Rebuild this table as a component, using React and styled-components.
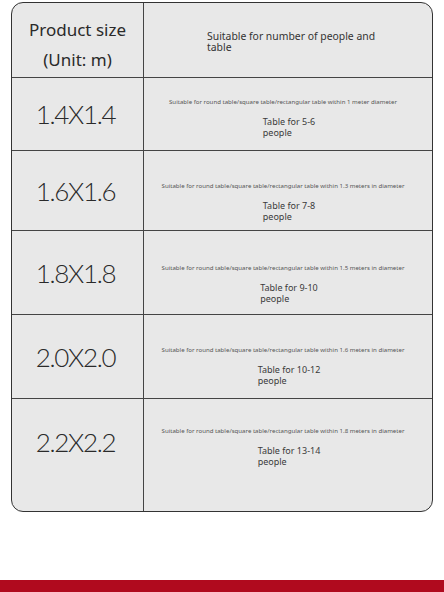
import React from 'react';
import styled, { createGlobalStyle } from 'styled-components';

const GlobalStyle = createGlobalStyle`
  html, body {
    margin: 0;
    padding: 0;
    background: #ffffff;
    font-family: "Noto Sans", "Open Sans", sans-serif;
  }
`;

const Page = styled.div`
  display: flex;
  flex-direction: column;
  height: 592px;
  padding-top: 2px;
  box-sizing: border-box;
`;

const Table = styled.div`
  margin: 0 11px;
  height: 510px;
  box-sizing: border-box;
  border: 1.5px solid #333;
  border-radius: 12px;
  background: #e8e8e8;
  overflow: hidden;
  display: flex;
  flex-direction: column;
`;

const Row = styled.div`
  display: grid;
  grid-template-columns: 132px 1fr;
  height: ${p => p.$h}px;
  flex: ${p => (p.$last ? '1' : 'none')};
  border-top: ${p => (p.$first ? 'none' : '1.5px solid #444')};
  box-sizing: border-box;
`;

const SizeCell = styled.div`
  border-right: 1.5px solid #444;
  display: flex;
  flex-direction: column;
  align-items: center;
  justify-content: center;
  padding-top: ${p => p.$pt || 0}px;
  padding-bottom: ${p => p.$pb || 0}px;
  box-sizing: border-box;
  color: #333;
`;

const HeadTitle = styled.div`
  font-size: 17px;
  line-height: 30px;
  text-align: center;
  color: #2a2a2a;
`;

const SizeValue = styled.div`
  font-family: "Lato", "Noto Sans", sans-serif;
  font-size: 26px;
  font-weight: 300;
  letter-spacing: -1.3px;
  color: #2a2a2a;
  margin-left: -4px;
`;

const InfoCell = styled.div`
  display: flex;
  flex-direction: column;
  align-items: center;
  justify-content: ${p => (p.$center ? 'center' : 'flex-start')};
  padding-top: ${p => p.$pt || 0}px;
  box-sizing: border-box;
`;

const HeadNote = styled.div`
  font-size: 10.4px;
  line-height: 11px;
  color: #333;
  max-width: 170px;
  text-align: left;
  padding-left: 8px;
`;

const SmallNote = styled.div`
  font-size: 6.1px;
  line-height: 8px;
  color: #555;
  white-space: nowrap;
  margin-left: -10px;
`;

const PeopleNote = styled.div`
  margin-top: 11px;
  font-size: 9px;
  line-height: 10.5px;
  color: #3a3a3a;
  text-align: left;
  white-space: nowrap;
  padding-left: 2px;
`;

const Footer = styled.div`
  margin-top: auto;
  height: 12px;
  background: #b00a1e;
`;

const rows = [
  { size: '1.4X1.4', dia: 'within 1 meter diameter', people: 'Table for 5-6', h: 73, pt: 20 },
  { size: '1.6X1.6', dia: 'within 1.3 meters in diameter', people: 'Table for 7-8', h: 80, pt: 31 },
  { size: '1.8X1.8', dia: 'within 1.5 meters in diameter', people: 'Table for 9-10', h: 84, pt: 33 },
  { size: '2.0X2.0', dia: 'within 1.6 meters in diameter', people: 'Table for 10-12', h: 84, pt: 31 },
  { size: '2.2X2.2', dia: 'within 1.8 meters in diameter', people: 'Table for 13-14', h: 115, pt: 28, last: true },
];

export default function App() {
  return (
    <Page>
      <GlobalStyle />
      <Table>
        <Row $h={74} $first>
          <SizeCell $pt={10}>
            <HeadTitle>Product size</HeadTitle>
            <HeadTitle>(Unit: m)</HeadTitle>
          </SizeCell>
          <InfoCell $center $pt={3}>
            <HeadNote>Suitable for number of people and table</HeadNote>
          </InfoCell>
        </Row>
        {rows.map(r => (
          <Row key={r.size} $h={r.h} $last={r.last}>
            <SizeCell $pb={r.last ? 26 : 0}>
              <SizeValue>{r.size}</SizeValue>
            </SizeCell>
            <InfoCell $pt={r.pt}>
              <SmallNote>Suitable for round table/square table/rectangular table {r.dia}</SmallNote>
              <PeopleNote>
                {r.people}
                <br />
                people
              </PeopleNote>
            </InfoCell>
          </Row>
        ))}
      </Table>
      <Footer />
    </Page>
  );
}
